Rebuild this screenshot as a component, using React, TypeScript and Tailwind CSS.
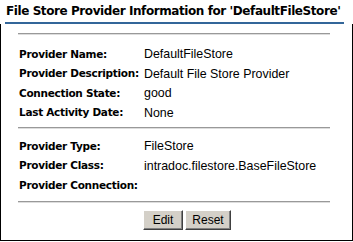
import React from "react";

const rows1: [string, string][] = [
  ["Provider Name:", "DefaultFileStore"],
  ["Provider Description:", "Default File Store Provider"],
  ["Connection State:", "good"],
  ["Last Activity Date:", "None"],
];
const rows2: [string, string][] = [
  ["Provider Type:", "FileStore"],
  ["Provider Class:", "intradoc.filestore.BaseFileStore"],
  ["Provider Connection:", ""],
];

function Sep() {
  return <div className="ml-[17px] w-[312px] border-t border-t-[#999999] border-b border-b-[#dddddd]" />;
}

function Rows({ rows }: { rows: [string, string][] }) {
  return (
    <div className="flex flex-col">
      {rows.map(([l, v]) => (
        <div key={l} className="flex h-[19.5px] items-center">
          <div className="w-[143px] pl-[18px] font-bold text-[10.5px] text-black [font-family:'DejaVu_Sans',sans-serif] tracking-[-0.3px] whitespace-nowrap">{l}</div>
          <div className="text-[12.4px] text-black [font-family:'Liberation_Sans',sans-serif] whitespace-nowrap">{v}</div>
        </div>
      ))}
    </div>
  );
}

function Btn({ children, w }: { children: React.ReactNode; w: string }) {
  return (
    <button className={`${w} h-[20px] bg-[#d4d0c8] border border-t-white border-l-white border-r-[#404040] border-b-[#404040] shadow-[inset_-1px_-1px_0_#808080] text-[12px] text-black [font-family:'Liberation_Sans',sans-serif] flex items-center justify-center`}>
      {children}
    </button>
  );
}

export default function App() {
  return (
    <div className="w-[353px] h-[242px] bg-white overflow-hidden">
      <div className="h-[24px] px-[5px] pt-[4px]">
        <div className="border-b-2 border-[#336699] w-[339px] h-[20px] pl-[1px] font-bold text-[12px] leading-[14px] text-black [font-family:'DejaVu_Sans',sans-serif] tracking-[-0.42px] whitespace-nowrap">
          File Store Provider Information for 'DefaultFileStore'
        </div>
      </div>
      <div className="w-[353px] h-[217px] border-l border-r border-b border-black pt-[9px]">
        <Sep />
        <div className="h-[10px]" />
        <Rows rows={rows1} />
        <div className="h-[4px]" />
        <Sep />
        <div className="h-[8px]" />
        <Rows rows={rows2} />
        <div className="h-[5px]" />
        <Sep />
        <div className="flex gap-[2px] pl-[142px] pt-[7px]">
          <Btn w="w-[40px]">Edit</Btn>
          <Btn w="w-[46px]">Reset</Btn>
        </div>
      </div>
    </div>
  );
}
